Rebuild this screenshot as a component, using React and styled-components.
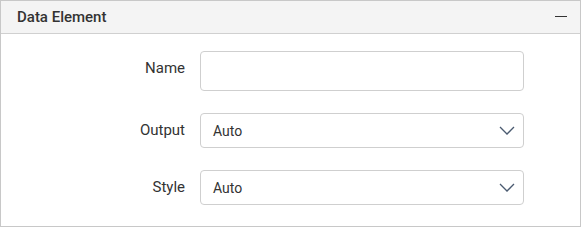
import styled, { createGlobalStyle } from "styled-components";

const GlobalStyle = createGlobalStyle`
    body {
        margin: 0;
        background: #fff;
        font-family: Roboto, "Liberation Sans", sans-serif;
    }
`;

const Panel = styled.div`
    width: 581px;
    height: 227px;
    box-sizing: border-box;
    border: 1px solid #c8c8c8;
    background: #fff;
    display: flex;
    flex-direction: column;
`;

const Header = styled.div`
    height: 32px;
    flex-shrink: 0;
    background: #f4f4f4;
    border-bottom: 1px solid #d0d0d0;
    display: flex;
    align-items: center;
    justify-content: space-between;
    padding: 0 13px 0 16px;
`;

const Title = styled.span`
    font-size: 15px;
    font-weight: 500;
    color: #333;
    margin-top: -1px;
`;

const Collapse = styled.span`
    display: block;
    width: 12px;
    height: 1.5px;
    background: #333;
    margin-top: -1px;
`;

const Body = styled.div`
    display: grid;
    grid-template-columns: 184px 324px;
    column-gap: 15px;
    row-gap: 22px;
    align-items: start;
    padding-top: 17px;
`;

const Label = styled.label`
    justify-self: end;
    font-size: 15px;
    line-height: 35px;
    color: #333;
`;

const Field = styled.div`
    box-sizing: border-box;
    height: ${(p) => p.$h}px;
    border: 1px solid #cfcfcf;
    border-radius: 4px;
    background: #fff;
    display: flex;
    align-items: center;
    justify-content: space-between;
    padding: 0 8px 0 12px;
    font-size: 14px;
    color: #333;
`;

const Chevron = () => (
    <svg width="16" height="9" viewBox="0 0 16 9" fill="none">
        <path d="M1 1l7 7 7-7" stroke="#4a5a70" strokeWidth="1.3" />
    </svg>
);

export default function App() {
    const rows = [
        { label: "Name", value: "", select: false },
        { label: "Output", value: "Auto", select: true },
        { label: "Style", value: "Auto", select: true },
    ];

    return (
        <>
            <GlobalStyle />
            <Panel>
                <Header>
                    <Title>Data Element</Title>
                    <Collapse />
                </Header>
                <Body>
                    {rows.map((r) => (
                        <>
                            <Label key={r.label + "l"}>{r.label}</Label>
                            <Field key={r.label + "f"} $h={r.select ? 35 : 40}>
                                <span>{r.value}</span>
                                {r.select && <Chevron />}
                            </Field>
                        </>
                    ))}
                </Body>
            </Panel>
        </>
    );
}
